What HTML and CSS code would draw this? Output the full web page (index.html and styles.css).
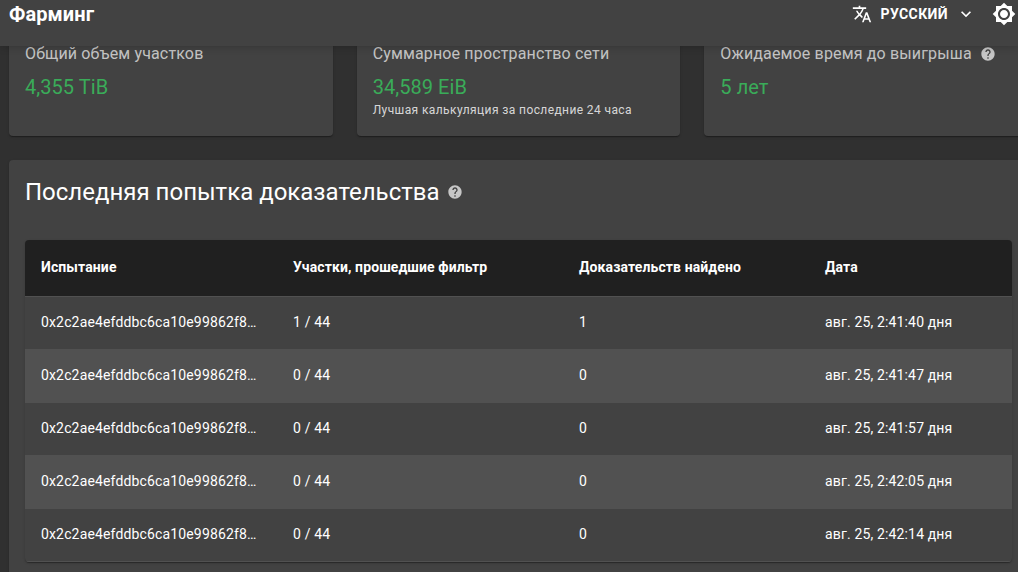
FILE: index.html
```
<!DOCTYPE html>
<html lang="ru">
<head>
    <meta charset="UTF-8">
    <meta name="viewport" content="width=device-width, initial-scale=1.0">
    <title>Фарминг</title>
    <link rel="stylesheet" href="styles.css">
</head>
<body>
    <header class="toolbar">
        <h1>Фарминг</h1>
        <div class="toolbar-actions">
            <button class="language-button">
                <svg class="icon-translate" viewBox="0 0 24 24"><path d="M12.87 15.07l-2.54-2.51.03-.03c1.74-1.94 2.98-4.17 3.71-6.53H17V4h-7V2H8v2H1v1.99h11.17C11.5 7.92 10.44 9.75 9 11.35 8.07 10.32 7.3 9.19 6.69 8h-2c.73 1.63 1.73 3.17 2.98 4.56l-5.09 5.02L4 19l5-5 3.11 3.11.76-2.04zM18.5 10h-2L12 22h2l1.12-3h4.75L21 22h2l-4.5-12zm-2.62 7l1.62-4.33L19.12 17h-3.24z"/></svg>
                <span>Русский</span>
                <svg class="icon-expand" viewBox="0 0 24 24"><path d="M16.59 8.59L12 13.17 7.41 8.59 6 10l6 6 6-6z"/></svg>
            </button>
            <button class="theme-button">
                <svg class="icon-theme" viewBox="0 0 24 24"><path d="M20 8.69V4h-4.69L12 .69 8.69 4H4v4.69L.69 12 4 15.31V20h4.69L12 23.31 15.31 20H20v-4.69L23.31 12 20 8.69zM12 18c-3.31 0-6-2.69-6-6s2.69-6 6-6 6 2.69 6 6-2.69 6-6 6zm0-10c-2.21 0-4 1.79-4 4s1.79 4 4 4 4-1.79 4-4-1.79-4-4-4z"/></svg>
            </button>
        </div>
    </header>

    <main class="content">
        <section class="cards">
            <div class="card">
                <p class="card-label">Общий объем участков</p>
                <p class="card-value">4,355 TiB</p>
            </div>
            <div class="card">
                <p class="card-label">Суммарное пространство сети</p>
                <p class="card-value">34,589 EiB</p>
                <p class="card-caption">Лучшая калькуляция за последние 24 часа</p>
            </div>
            <div class="card">
                <p class="card-label">
                    <span>Ожидаемое время до выигрыша</span>
                    <svg class="icon-help" viewBox="0 0 24 24"><path d="M12 2C6.48 2 2 6.48 2 12s4.48 10 10 10 10-4.48 10-10S17.52 2 12 2zm1 17h-2v-2h2v2zm2.07-7.75l-.9.92C13.45 12.9 13 13.5 13 15h-2v-.5c0-1.1.45-2.1 1.17-2.83l1.24-1.26c.37-.36.59-.86.59-1.41 0-1.1-.9-2-2-2s-2 .9-2 2H8c0-2.21 1.79-4 4-4s4 1.79 4 4c0 .88-.36 1.68-.93 2.25z"/></svg>
                </p>
                <p class="card-value">5 лет</p>
            </div>
        </section>

        <section class="panel">
            <h2>
                <span>Последняя попытка доказательства</span>
                <svg class="icon-help" viewBox="0 0 24 24"><path d="M12 2C6.48 2 2 6.48 2 12s4.48 10 10 10 10-4.48 10-10S17.52 2 12 2zm1 17h-2v-2h2v2zm2.07-7.75l-.9.92C13.45 12.9 13 13.5 13 15h-2v-.5c0-1.1.45-2.1 1.17-2.83l1.24-1.26c.37-.36.59-.86.59-1.41 0-1.1-.9-2-2-2s-2 .9-2 2H8c0-2.21 1.79-4 4-4s4 1.79 4 4c0 .88-.36 1.68-.93 2.25z"/></svg>
            </h2>
            <div class="table-container">
                <table>
                    <thead>
                        <tr>
                            <th class="col-challenge">Испытание</th>
                            <th class="col-plots">Участки, прошедшие фильтр</th>
                            <th class="col-proofs">Доказательств найдено</th>
                            <th>Дата</th>
                        </tr>
                    </thead>
                    <tbody>
                        <tr>
                            <td>0x2c2ae4efddbc6ca10e99862f8…</td>
                            <td>1 / 44</td>
                            <td>1</td>
                            <td>авг. 25, 2:41:40 дня</td>
                        </tr>
                        <tr>
                            <td>0x2c2ae4efddbc6ca10e99862f8…</td>
                            <td>0 / 44</td>
                            <td>0</td>
                            <td>авг. 25, 2:41:47 дня</td>
                        </tr>
                        <tr>
                            <td>0x2c2ae4efddbc6ca10e99862f8…</td>
                            <td>0 / 44</td>
                            <td>0</td>
                            <td>авг. 25, 2:41:57 дня</td>
                        </tr>
                        <tr>
                            <td>0x2c2ae4efddbc6ca10e99862f8…</td>
                            <td>0 / 44</td>
                            <td>0</td>
                            <td>авг. 25, 2:42:05 дня</td>
                        </tr>
                        <tr>
                            <td>0x2c2ae4efddbc6ca10e99862f8…</td>
                            <td>0 / 44</td>
                            <td>0</td>
                            <td>авг. 25, 2:42:14 дня</td>
                        </tr>
                    </tbody>
                </table>
            </div>
        </section>
    </main>
</body>
</html>
```
FILE: styles.css
```
* {
    box-sizing: border-box;
    margin: 0;
    padding: 0;
}

body {
    font-family: Roboto, "Open Sans", sans-serif;
    background: #303030;
    color: #fff;
    height: 100vh;
    overflow: hidden;
}

svg {
    fill: currentColor;
    flex-shrink: 0;
}

button {
    display: flex;
    align-items: center;
    background: none;
    border: none;
    color: inherit;
    font-family: inherit;
    cursor: pointer;
}

.toolbar {
    position: relative;
    z-index: 1;
    display: flex;
    justify-content: space-between;
    align-items: flex-start;
    height: 46px;
    padding: 0 2px 0 9px;
    background: #424242;
    box-shadow: 0 1px 8px rgba(0, 0, 0, 0.2);
}

.toolbar h1 {
    font-size: 20px;
    font-weight: 700;
    line-height: 28px;
    letter-spacing: 0.005em;
}

.toolbar-actions {
    display: flex;
    align-items: center;
    height: 28px;
}

.language-button {
    margin-right: 16px;
    font-size: 14px;
    font-weight: 700;
    line-height: 24px;
    letter-spacing: 0.02857em;
    text-transform: uppercase;
}

.icon-translate {
    width: 20px;
    height: 20px;
    margin-right: 9px;
}

.icon-expand {
    width: 20px;
    height: 20px;
    margin-left: 8px;
}

.icon-theme {
    width: 24px;
    height: 24px;
}

.icon-help {
    width: 16px;
    height: 16px;
    margin-left: 8px;
    color: #c6c6c6;
}

/* wider than the window, the right edge is cut off */
.content {
    width: 1019px;
    margin-left: 9px;
}

.cards {
    display: grid;
    grid-template-columns: repeat(3, 1fr);
    gap: 24px;
    margin-top: -20px;
    margin-bottom: 24px;
}

.card,
.panel {
    background: #424242;
    border-radius: 4px;
    box-shadow: 0 2px 1px -1px rgba(0, 0, 0, 0.2), 0 1px 1px 0 rgba(0, 0, 0, 0.14), 0 1px 3px 0 rgba(0, 0, 0, 0.12);
}

.card {
    height: 110px;
    padding: 16px;
}

.card-label {
    display: flex;
    align-items: center;
    color: rgba(255, 255, 255, 0.7);
    font-size: 16px;
    line-height: 24px;
    letter-spacing: 0.00938em;
}

.card-value {
    margin-top: 5px;
    color: #3aac59;
    font-size: 20px;
    line-height: 32px;
    letter-spacing: 0.0025em;
}

.card-caption {
    margin-top: -3px;
    color: rgba(255, 255, 255, 0.8);
    font-size: 12px;
    line-height: 20px;
    letter-spacing: 0.03333em;
}

.panel {
    height: 440px;
    padding: 16px;
}

.panel h2 {
    display: flex;
    align-items: center;
    margin-bottom: 32px;
    font-size: 24px;
    font-weight: 400;
    line-height: 32px;
}

.panel h2 .icon-help {
    margin-left: 7px;
}

.table-container {
    border-radius: 4px;
    overflow: hidden;
    box-shadow: 0 2px 1px -1px rgba(0, 0, 0, 0.2), 0 1px 1px 0 rgba(0, 0, 0, 0.14), 0 1px 3px 0 rgba(0, 0, 0, 0.12);
}

table {
    width: 100%;
    border-collapse: separate;
    border-spacing: 0;
    table-layout: fixed;
    font-size: 14px;
    letter-spacing: 0.01071em;
    text-align: left;
}

th,
td {
    padding: 0 16px;
    border-bottom: 1px solid #515151;
    white-space: nowrap;
}

th {
    height: 57px;
    padding-bottom: 2px;
    background: #202020;
    font-weight: 700;
    letter-spacing: 0.008em;
}

td {
    height: 53px;
    padding-bottom: 2px;
}

tbody tr:nth-child(even) {
    background: #515151;
}

.col-challenge {
    width: 252px;
}

.col-plots {
    width: 286px;
}

.col-proofs {
    width: 246px;
}
```
